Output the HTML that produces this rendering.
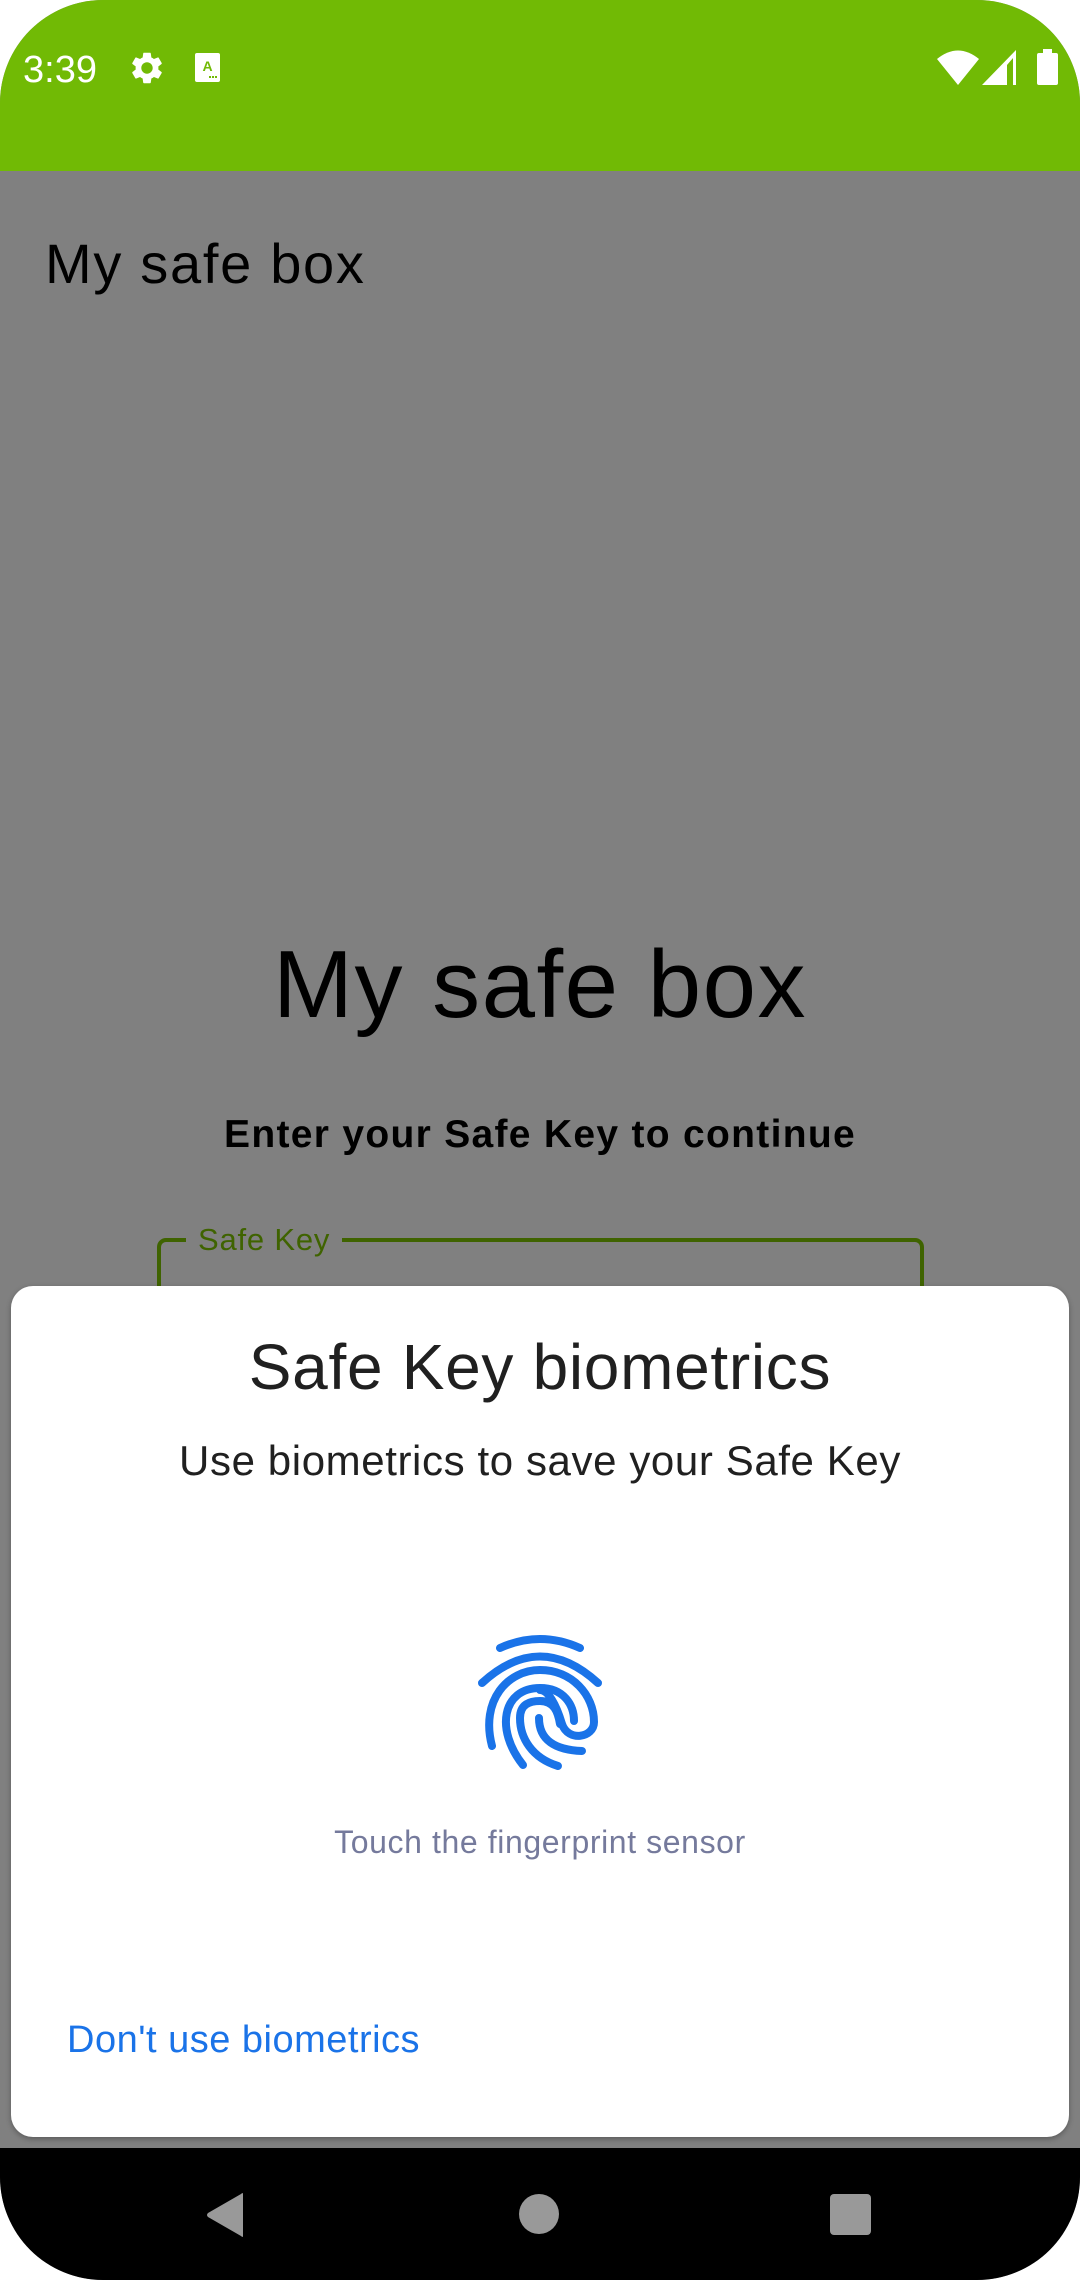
<!DOCTYPE html>
<html><head><meta charset="utf-8"><style>
*{margin:0;padding:0;box-sizing:border-box}
body{width:1080px;height:2280px;background:#fff;overflow:hidden;font-family:"Liberation Sans",Roboto,sans-serif;position:relative}
.phone{position:absolute;left:0;top:0;width:1080px;height:2280px;background:#808080;border-radius:103px;overflow:hidden}
.t{position:absolute;line-height:1;white-space:nowrap}
.c{left:0;width:1080px;text-align:center}
</style></head><body>
<div class="phone">
  <div style="position:absolute;left:0;top:0;width:1080px;height:171px;background:#71ba05"></div>
  <div class="t" style="left:23px;top:51px;font-size:38px;color:#fff">3:39</div>
  <svg style="position:absolute;left:128px;top:49px" width="38" height="38" viewBox="0 0 24 24"><path fill="#fff" d="M19.14 12.94c.04-.3.06-.61.06-.94 0-.32-.02-.64-.07-.94l2.030-1.58a.49.49 0 0 0 .12-.61l-1.92-3.32a.488.488 0 0 0-.59-.22l-2.39.96c-.5-.38-1.03-.7-1.62-.94l-.36-2.54a.484.484 0 0 0-.48-.41h-3.840c-.24 0-.43.17-.47.41l-.36 2.54c-.59.24-1.130.57-1.62.94l-2.39-.96c-.22-.08-.47 0-.59.22L2.74 8.87c-.12.21-.08.47.12.61l2.03 1.58c-.05.3-.09.63-.09.94s.02.64.07.94l-2.03 1.58a.49.49 0 0 0-.12.61l1.92 3.32c.12.22.37.29.59.22l2.39-.96c.5.38 1.03.7 1.62.94l.36 2.54c.05.24.24.41.48.41h3.84c.24 0 .44-.17.47-.41l.36-2.54c.59-.24 1.13-.56 1.62-.94l2.39.96c.22.08.47 0 .59-.22l1.92-3.32c.12-.22.07-.47-.12-.61l-2.01-1.58zM12 15.6c-1.98 0-3.6-1.62-3.6-3.6s1.62-3.6 3.6-3.6 3.6 1.62 3.6 3.6-1.62 3.6-3.6 3.6z"/></svg>
  <svg style="position:absolute;left:195px;top:53px" width="25" height="29" viewBox="0 0 25 29"><rect width="25" height="29" rx="2" fill="#fff"/><text x="12.5" y="18" font-size="14" font-family="Liberation Sans" fill="#71ba05" text-anchor="middle" font-weight="bold">A</text><rect x="14" y="23" width="2" height="2" fill="#71ba05"/><rect x="17" y="23" width="2" height="2" fill="#71ba05"/><rect x="20" y="23" width="2" height="2" fill="#71ba05"/></svg>
  <svg style="position:absolute;left:937px;top:50px" width="42" height="35" viewBox="0 0 42 35"><path fill="#fff" d="M21 35 L0 9 Q21 -8 42 9 Z"/></svg>
  <svg style="position:absolute;left:982px;top:50px" width="36" height="35" viewBox="0 0 36 35"><path fill="#fff" d="M0 35 L34 0 L34 35 Z"/><path fill="#71ba05" d="M25 35 L31 35 L31 8 L25 15 Z"/></svg>
  <svg style="position:absolute;left:1037px;top:49px" width="21" height="36" viewBox="0 0 21 36"><path fill="#fff" d="M6 0h9v4h4a2 2 0 0 1 2 2v28a2 2 0 0 1-2 2H2a2 2 0 0 1-2-2V6a2 2 0 0 1 2-2h4z"/></svg>

  <div class="t" style="left:45px;top:236px;font-size:56px;letter-spacing:1.7px;color:#000">My safe box</div>
  <div class="t c" style="top:937px;font-size:96px;letter-spacing:1.5px;color:#000">My safe box</div>
  <div class="t c" style="top:1115px;font-size:39px;color:#000;font-weight:bold;letter-spacing:1.3px">Enter your Safe Key to continue</div>
  <div style="position:absolute;left:157px;top:1238px;width:767px;height:120px;border:4px solid #3f6300;border-radius:9px"></div>
  <div class="t" style="left:186px;top:1224px;font-size:31px;letter-spacing:0.8px;color:#3f6300;background:#808080;padding:0 12px">Safe Key</div>

  <div style="position:absolute;left:11px;top:1286px;width:1058px;height:851px;background:#fff;border-radius:22px;box-shadow:0 2px 6px rgba(0,0,0,.3)"></div>
  <div class="t c" style="top:1335px;font-size:64px;letter-spacing:0.7px;color:#202020">Safe Key biometrics</div>
  <div class="t c" style="top:1440px;font-size:42px;letter-spacing:0.6px;color:#202020">Use biometrics to save your Safe Key</div>
  <svg style="position:absolute;left:440px;top:1600px" width="200" height="200" viewBox="0 0 200 200" fill="none" stroke="#1a73e8" stroke-width="8" stroke-linecap="round">
    <path d="M60 48 Q100 30 140 48"/>
    <path d="M42 83 Q100 30 158 83"/>
    <path d="M52 146 C40 100 68 70 100 70 C132 70 154 95 154 122 C154 138 128 142 122 124 C116 104 108 90 100 90"/>
    <path d="M83 165 C55 130 62 88 100 88 C124 88 134 105 134 121"/>
    <path d="M118 166 C92 158 80 138 80 118 C80 104 90 101 100 101 C114 101 118 112 120 124"/>
    <path d="M99 118 C99 140 115 150 142 151"/>
  </svg>
  <div class="t c" style="top:1826px;font-size:32px;letter-spacing:0.6px;color:#757a9c">Touch the fingerprint sensor</div>
  <div class="t" style="left:67px;top:2021px;font-size:38px;letter-spacing:0.5px;color:#1a73e8">Don't use biometrics</div>

  <div style="position:absolute;left:0;top:2148px;width:1080px;height:132px;background:#000"></div>
  <svg style="position:absolute;left:205px;top:2192px" width="40" height="46" viewBox="0 0 40 46"><path fill="#999" d="M38 2 L38 44 Q38 46 36 44 L3 25 Q1 23 3 21 L36 2 Q38 0 38 2Z"/></svg>
  <div style="position:absolute;left:519px;top:2194px;width:40px;height:40px;border-radius:50%;background:#999"></div>
  <div style="position:absolute;left:830px;top:2194px;width:41px;height:41px;border-radius:4px;background:#999"></div>
</div>
</body></html>
